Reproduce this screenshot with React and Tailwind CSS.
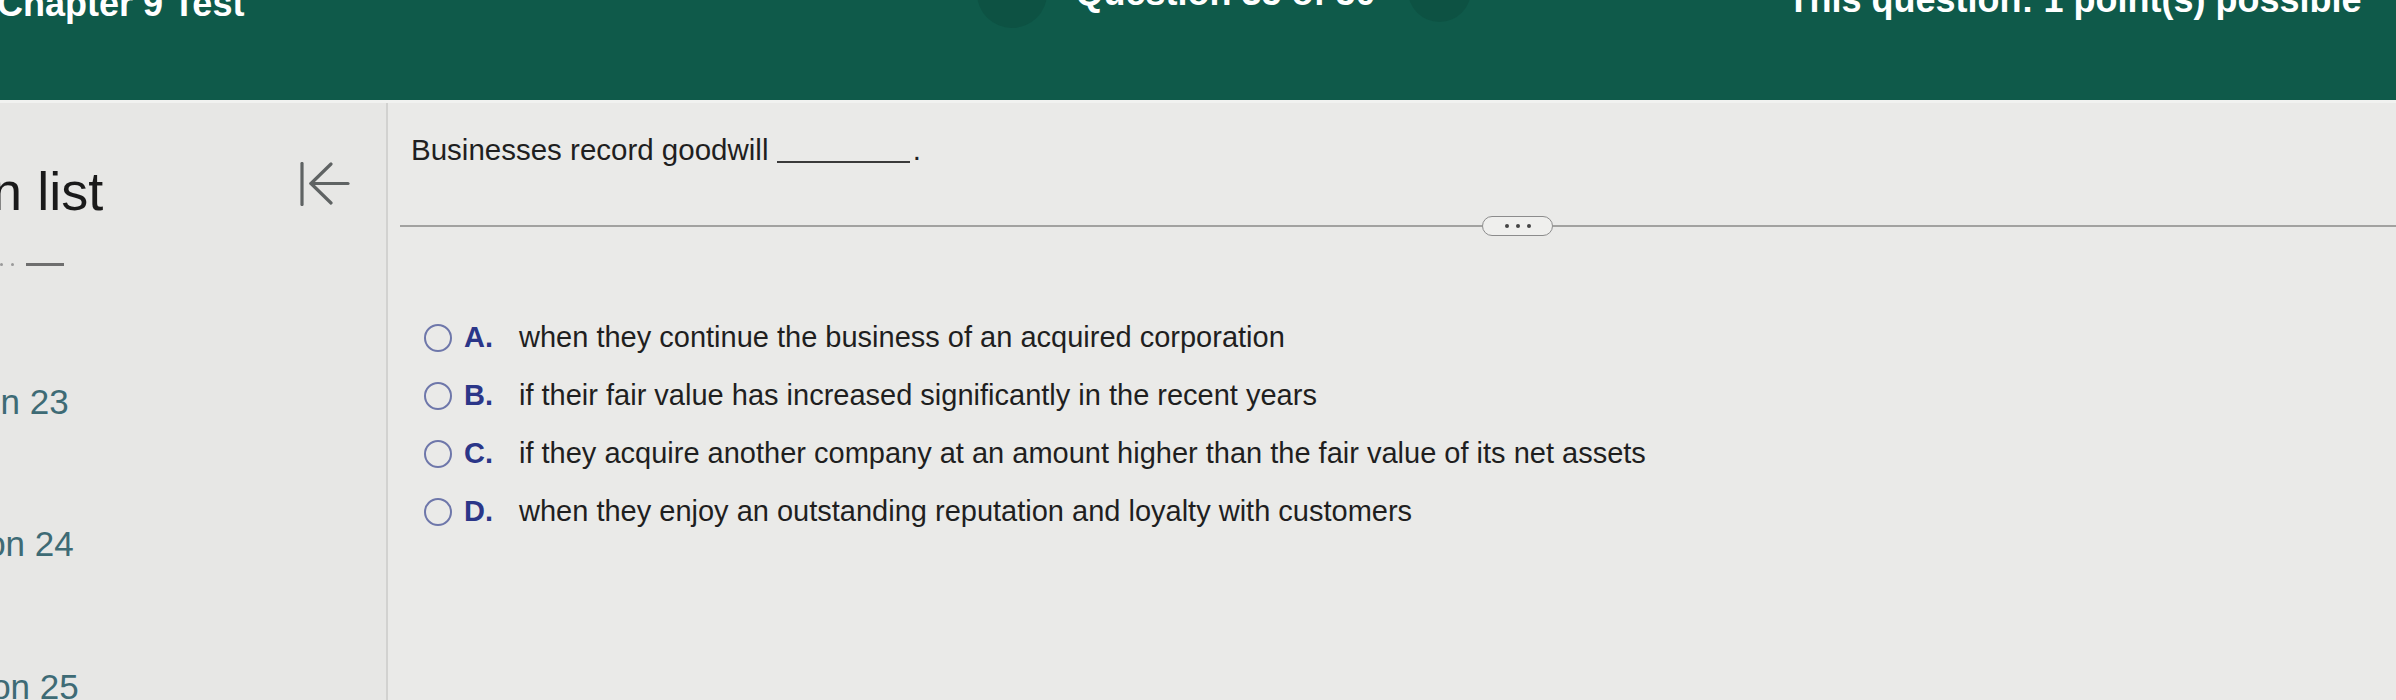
import React from 'react';

const OPTIONS = [
  { key: 'A', text: 'when they continue the business of an acquired corporation' },
  { key: 'B', text: 'if their fair value has increased significantly in the recent years' },
  { key: 'C', text: 'if they acquire another company at an amount higher than the fair value of its net assets' },
  { key: 'D', text: 'when they enjoy an outstanding reputation and loyalty with customers' },
];

function CollapseIcon() {
  return (
    <svg width="50" height="44" viewBox="0 0 50 44" fill="none" stroke="#5f6363" strokeWidth="3.2" strokeLinecap="round" strokeLinejoin="round">
      <path d="M2 1.5 L2 42.5" />
      <path d="M11 21.5 L48 21.5" />
      <path d="M31 2 L11 21.5 L31 41" />
    </svg>
  );
}

export default function App() {
  return (
    <div className="w-full h-[700px] overflow-hidden bg-[#eaeae8] flex flex-col" style={{ fontFamily: '"Liberation Sans", Arial, sans-serif' }}>

      {/* Header */}
      <header className="h-[100px] shrink-0 bg-[#0f5a4a] overflow-hidden flex items-start text-white font-bold text-[36px] leading-none whitespace-nowrap">
        <span className="-mt-[14px] -ml-[3px] shrink-0">Chapter 9 Test</span>
        <span className="-mt-[42px] ml-[733px] w-[70px] h-[70px] rounded-full bg-[#0d5243] shrink-0" />
        <span className="-mt-[25px] ml-[28px] shrink-0">Question 35 of 50</span>
        <span className="-mt-[42px] ml-[33px] w-[63px] h-[64px] rounded-full bg-[#0d5243] shrink-0" />
        <span className="-mt-[18px] ml-[316px] shrink-0">This question: 1 point(s) possible</span>
      </header>

      <div className="flex flex-1 border-t-[3px] border-[#f1f2f0]">

        {/* Sidebar */}
        <aside className="w-[388px] shrink-0 bg-[#e7e7e5] border-r-2 border-[#d2d2d0] overflow-hidden flex flex-col whitespace-nowrap">
          <div className="flex items-start pt-[59px]">
            <span className="mt-[2px] -ml-[194px] text-[54px] leading-none text-[#1a1a1a]">Question list</span>
            <span className="ml-auto mr-[36px]"><CollapseIcon /></span>
          </div>
          <div className="flex items-center mt-[44px] h-[4px]">
            <span className="w-[3px] h-[3px] rounded-full bg-[#9a9a9a]" />
            <span className="ml-[8px] w-[3px] h-[3px] rounded-full bg-[#9a9a9a]" />
            <span className="ml-[12px] w-[38px] h-[3px] bg-[#6e6e6e]" />
          </div>
          <span className="mt-[118px] -ml-[120px] text-[35px] leading-none text-[#3e6b75]">Question 23</span>
          <span className="mt-[107px] -ml-[115px] text-[35px] leading-none text-[#3e6b75]">Question 24</span>
          <span className="mt-[108px] -ml-[110px] text-[35px] leading-none text-[#3e6b75]">Question 25</span>
        </aside>

        {/* Question */}
        <main className="flex-1 flex flex-col">
          <div className="mt-[32px] ml-[23px] text-[29.5px] leading-none text-[#1f1f1f] whitespace-nowrap">
            {'Businesses record goodwill '}
            <span className="inline-block w-[133px] h-[2px] bg-[#3a3a3a] -mb-[3px]" />
            <span className="ml-[3px]">.</span>
          </div>

          <div className="flex items-center h-[20px] mt-[51px]">
            <div className="ml-[12px] w-[1082px] h-[2px] bg-[#a2a2a0]" />
            <div className="w-[71px] h-[20px] shrink-0 rounded-full border-[1.5px] border-[#8c8c8c] bg-[#efefed] flex items-center justify-center gap-[7px]">
              <span className="w-[4px] h-[4px] rounded-full bg-[#444]" />
              <span className="w-[4px] h-[4px] rounded-full bg-[#444]" />
              <span className="w-[4px] h-[4px] rounded-full bg-[#444]" />
            </div>
            <div className="flex-1 h-[2px] bg-[#a2a2a0]" />
          </div>

          <div className="mt-[73px] flex flex-col">
            {OPTIONS.map(o => (
              <div key={o.key} className="flex items-center h-[58px] whitespace-nowrap">
                <span className="ml-[36px] w-[28px] h-[28px] shrink-0 rounded-full border-[2.5px] border-[#6e77aa]" />
                <span className="ml-[12px] w-[55px] shrink-0 text-[29px] font-bold text-[#2b3688]">{o.key}.</span>
                <span className="text-[29px] text-[#1f1f1f]">{o.text}</span>
              </div>
            ))}
          </div>
        </main>
      </div>
    </div>
  );
}
